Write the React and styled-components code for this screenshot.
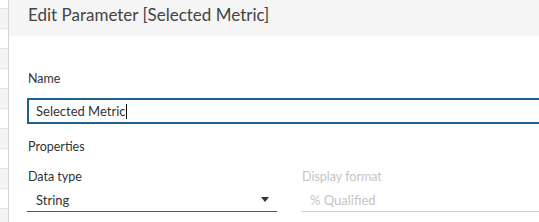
import styled, { createGlobalStyle } from "styled-components";

const GlobalStyle = createGlobalStyle`
  body {
    margin: 0;
    background: #ffffff;
    font-family: Lato, "Open Sans", Arial, sans-serif;
    overflow: hidden;
  }
`;

const stripRows = [9, 20, 20, 20, 20, 20, 20, 20, 20, 20, 20, 20];

const App = () => {
    return (
        <>
            <GlobalStyle/>
            <Page>
                <Strip>
                    {stripRows.map((h, i) => (
                        <StripRow key={i} $height={h} $shaded={i % 2 === 1}/>
                    ))}
                </Strip>
                <Dialog>
                    <Header>
                        <Title>Edit Parameter [Selected Metric]</Title>
                    </Header>
                    <Body>
                        <Label>Name</Label>
                        <NameInput>
                            Selected Metric<Caret/>
                        </NameInput>
                        <Section>Properties</Section>
                        <Columns>
                            <Field>
                                <Label>Data type</Label>
                                <Select>
                                    <span>String</span>
                                    <Arrow/>
                                </Select>
                            </Field>
                            <Field>
                                <Label $disabled>Display format</Label>
                                <Select $disabled>
                                    <span>% Qualified</span>
                                </Select>
                            </Field>
                        </Columns>
                    </Body>
                </Dialog>
            </Page>
        </>
    );
};

const Page = styled.div`
  display: flex;
  width: 539px;
  height: 222px;
  overflow: hidden;
`;
const Strip = styled.div`
  width: 8px;
  flex-shrink: 0;
  display: flex;
  flex-direction: column;
`;
const StripRow = styled.div`
  height: ${({$height}) => $height}px;
  flex-shrink: 0;
  box-sizing: border-box;
  border-bottom: 1px solid #e6e6e6;
  background: ${({$shaded}) => ($shaded ? "#f4f4f4" : "#ffffff")};
`;
const Dialog = styled.div`
  flex: 1;
  min-width: 0;
  border-left: 1px solid #d6d6d6;
  display: flex;
  flex-direction: column;
`;
const Header = styled.div`
  height: 36px;
  background: #f5f5f5;
  display: flex;
  align-items: center;
  padding-left: 19px;
`;
const Title = styled.div`
  font-size: 17px;
  color: #444444;
  white-space: nowrap;
  margin-top: -8px;
`;
const Body = styled.div`
  padding: 35px 0 0 18px;
  display: flex;
  flex-direction: column;
`;
const Label = styled.div`
  font-size: 12.5px;
  line-height: 16px;
  color: ${({$disabled}) => ($disabled ? "#c4c4c4" : "#333333")};
  margin-left: 1px;
  white-space: nowrap;
`;
const NameInput = styled.div`
  margin-top: 11px;
  width: 560px;
  height: 26px;
  box-sizing: border-box;
  border: 2px solid #1f5f8f;
  padding-left: 7px;
  font-size: 13px;
  color: #333333;
  display: flex;
  align-items: center;
  white-space: nowrap;
`;
const Caret = styled.span`
  display: inline-block;
  width: 1px;
  height: 15px;
  background: #111111;
`;
const Section = styled.div`
  margin-top: 15px;
  font-size: 12.5px;
  line-height: 16px;
  color: #333333;
  margin-left: 1px;
`;
const Columns = styled.div`
  margin-top: 14px;
  display: flex;
  gap: 24px;
`;
const Field = styled.div`
  width: 250px;
  flex-shrink: 0;
  display: flex;
  flex-direction: column;
`;
const Select = styled.div`
  margin-top: 3px;
  height: 24px;
  box-sizing: border-box;
  border-bottom: 1px solid ${({$disabled}) => ($disabled ? "#cccccc" : "#555555")};
  padding: 0 8px 0 9px;
  display: flex;
  align-items: center;
  justify-content: space-between;
  font-size: 13px;
  color: ${({$disabled}) => ($disabled ? "#c4c4c4" : "#333333")};
`;
const Arrow = styled.span`
  width: 0;
  height: 0;
  border-left: 4px solid transparent;
  border-right: 4px solid transparent;
  border-top: 5px solid #333333;
`;

export default App;
